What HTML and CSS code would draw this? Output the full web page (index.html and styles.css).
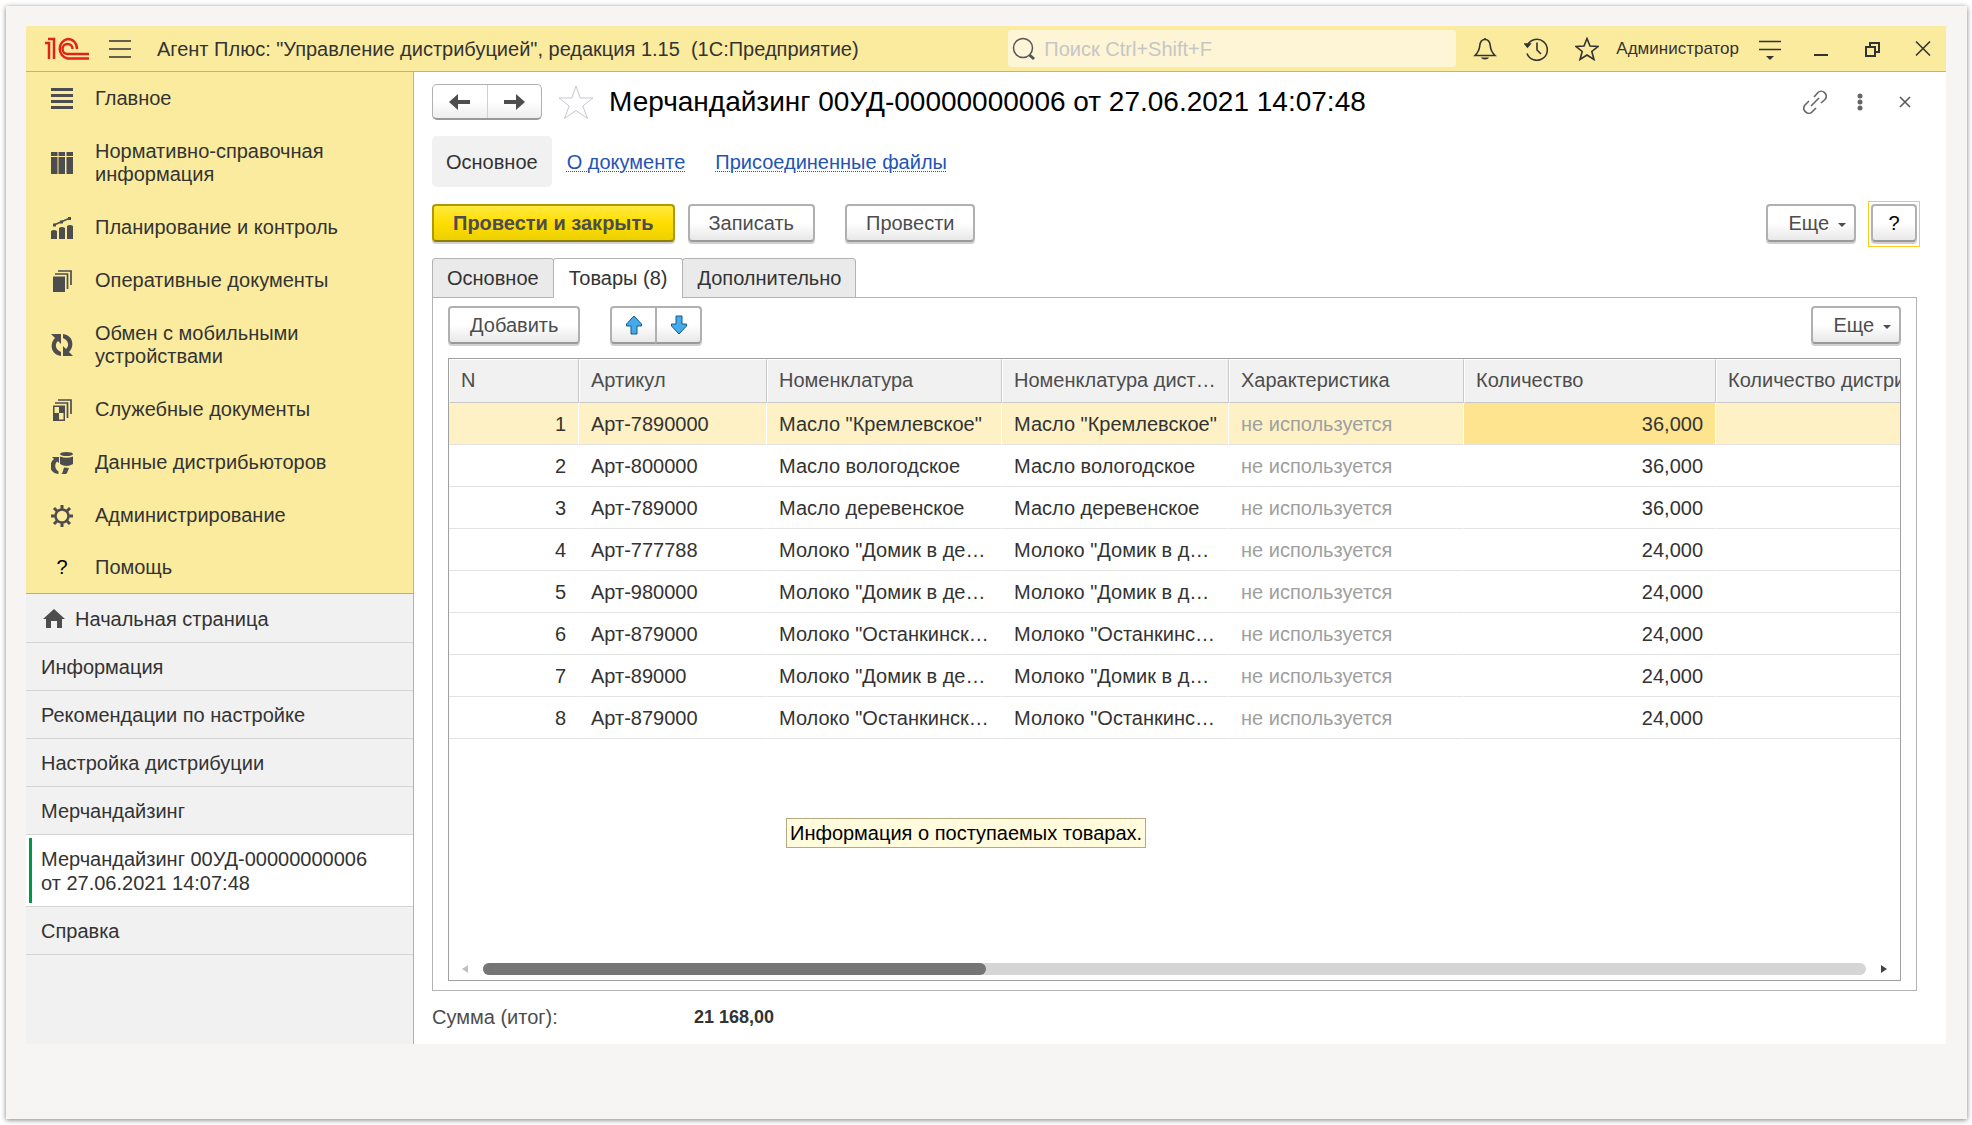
FILE: index.html
```html
<!DOCTYPE html>
<html lang="ru">
  <head>
    <meta charset="utf-8">
    <title>Мерчандайзинг 00УД-00000000006</title>
    <link rel="stylesheet" href="styles.css">
  </head>
  <body>
    <div class="paper">
      <div class="app">
        <header class="topbar">
          <svg class="logo" width="44" height="24" viewBox="0 0 44 24" fill="none" stroke="#e2231a" stroke-width="2.500">
            <path d="M0 6h4v16M3 2h6v20"/>
            <path d="M32 12C32 6 28 2 22.500 2A10 10 0 0 0 22.500 21.500H44"/>
            <path d="M27.500 12C27.500 9 25.500 7 22.500 7A5 5 0 0 0 22.500 17H44"/>
          </svg>
          <button class="icon-btn burger" aria-label="Меню">
            <svg width="24" height="24" viewBox="0 0 24 24" stroke="#333" stroke-width="1.500"><path d="M1 4h22M1 12h22M1 20h22"/></svg>
          </button>
          <span class="app-title">Агент Плюс: "Управление дистрибуцией", редакция 1.15&nbsp; (1С:Предприятие)</span>
          <label class="search">
            <svg width="24" height="24" viewBox="0 0 24 24" fill="none" stroke="#555"><circle cx="11" cy="11" r="9.500" stroke-width="1.500"/><path d="M17.500 18l4.500 4" stroke-width="3"/></svg>
            <input type="text" placeholder="Поиск Ctrl+Shift+F">
          </label>
          <div class="tools">
            <button class="icon-btn" aria-label="Оповещения">
              <svg width="24" height="24" viewBox="0 0 24 24" fill="none" stroke="#333" stroke-width="1.600"><path d="M12 2.500c-4 0-5 3-5.300 6.500C6.300 13.500 4.500 16 2 18.500h20c-2.500-2.500-4.300-5-4.700-9.500C17 5.500 16 2.500 12 2.500z"/><path d="M10.500 2.500a1.500 1.500 0 0 1 3 0zM8 20.500h8c-1 2.500-7 2.500-8 0z" fill="#333" stroke="none"/></svg>
            </button>
            <button class="icon-btn" aria-label="История">
              <svg width="24" height="24" viewBox="0 0 24 24" fill="none" stroke="#333" stroke-width="1.600"><path d="M3.500 8A10.500 10.500 0 1 1 3 16.500M13 5.500V13l4 4"/><path d="M1 7h5l-2.500 3z" fill="#333"/></svg>
            </button>
            <button class="icon-btn" aria-label="Избранное">
              <svg width="24" height="24" viewBox="0 0 24 24" fill="none" stroke="#333" stroke-width="1.600"><path d="M12 1.500l3 7.500 8 .5-6.200 5 2.200 8-7-4.500L5 22.500l2.200-8L1 9.500 9 9z"/></svg>
            </button>
            <button class="user">Администратор</button>
            <button class="icon-btn" aria-label="Настройки">
              <svg width="24" height="24" viewBox="0 0 24 24" stroke="#333" stroke-width="1.500"><path d="M1 4.500h22M1 12.500h22"/><path d="M8 19h8l-4 4z" fill="#333" stroke="none"/></svg>
            </button>
            <button class="icon-btn" aria-label="Свернуть">
              <svg width="24" height="24" viewBox="0 0 24 24"><path d="M5 17h14v2H5z" fill="#333"/></svg>
            </button>
            <button class="icon-btn" aria-label="Восстановить">
              <svg width="24" height="24" viewBox="0 0 24 24" fill="none" stroke="#333" stroke-width="2"><path d="M6 10h9v9H6zM10 10V6h9v9h-4"/></svg>
            </button>
            <button class="icon-btn" aria-label="Закрыть приложение">
              <svg width="24" height="24" viewBox="0 0 24 24" stroke="#333" stroke-width="1.600"><path d="M5 4.500l14 14M19 4.500l-14 14"/></svg>
            </button>
          </div>
        </header>

        <div class="workspace">
          <aside class="sidebar">
            <nav class="sections">
              <a href="#"><svg viewBox="0 0 22 22"><path d="M0 0h22v3H0zM0 6h22v3H0zM0 12h22v3H0zM0 18h22v3H0z"/></svg>Главное</a>
              <a href="#"><svg viewBox="0 0 22 22"><path d="M0 0h6.500v4H0zM7.500 0h6.500v4H7.500zM15.500 0H22v4h-6.500zM0 5h6.500v17H0zM7.500 5h6.500v17H7.500zM15.500 5H22v17h-6.500z"/></svg>Нормативно-справочная информация</a>
              <a href="#"><svg viewBox="0 0 22 22"><path d="M0 14q3-2 6 0v8H0zM8 11q3-2 6 0v11H8zM16 9q3-2 6 0v13h-6z"/><path d="M3 8l8-3.500L18 1.500" fill="none" stroke="#4d4d4d" stroke-width="1.500"/><path d="M2 6.500h3v3H2zM9 3.500h3v3H9zM17 0h3v3h-3z"/></svg>Планирование и контроль</a>
              <a href="#"><svg viewBox="0 0 22 22"><path d="M2 6.500h12V22H2z"/><path d="M4 4h12.500v15M7 1h13v14" fill="none" stroke="#4d4d4d" stroke-width="1.700"/></svg>Оперативные документы</a>
              <a href="#"><svg viewBox="0 0 22 22"><path d="M0 0h10v10L7 7c-4 4-2 9 3 11v4C0 21-2 10 4 4zM22 22H12V12l3 3c4-4 2-9-3-11V0c10 1 12 12 6 18z"/></svg>Обмен с мобильными устройствами</a>
              <a href="#"><svg viewBox="0 0 22 22"><path d="M2 6.500h12V22H2zM3.500 8v6H8V8zM8 14v6.500h4.500V14z" fill-rule="evenodd"/><path d="M4 4h12.500v15M7 1h13v14" fill="none" stroke="#4d4d4d" stroke-width="1.700"/></svg>Служебные документы</a>
              <a href="#"><svg viewBox="0 0 22 22"><ellipse cx="15.500" cy="2" rx="6.500" ry="2"/><path d="M9 4.500q6.500 2.500 13 0V12q-6.500 4-13 0z"/><path d="M1 5h7v6L6 9.500c-3 3-2 8 1.500 10V22C-2 21-3 12 3 7zM10.500 22l1-1.500 1.500-5 5 .500-2 5-1 1z"/></svg>Данные дистрибьюторов</a>
              <a href="#"><svg viewBox="0 0 22 22" fill="none" stroke="#4d4d4d"><circle cx="11" cy="11" r="6.500" stroke-width="2.500"/><path d="M11 0v4M11 18v4M0 11h4M18 11h4M3 3l3 3M16 16l3 3M19 3l-3 3M6 16l-3 3" stroke-width="3"/></svg>Администрирование</a>
              <a href="#"><span class="question">?</span>Помощь</a>
            </nav>
            <nav class="windows">
              <a href="#"><svg class="home" width="22" height="20" viewBox="0 0 22 20"><path d="M11 0l11 10h-3v9h-5v-7H8v7H3v-9H0z" fill="#4d4d4d"/></svg>Начальная страница</a>
              <a href="#">Информация</a>
              <a href="#">Рекомендации по настройке</a>
              <a href="#">Настройка дистрибуции</a>
              <a href="#">Мерчандайзинг</a>
              <a href="#" class="active">Мерчандайзинг 00УД-00000000006 от 27.06.2021 14:07:48</a>
              <a href="#">Справка</a>
            </nav>
          </aside>

          <main class="document">
            <div class="doc-head">
              <div class="history">
                <button aria-label="Назад"><svg width="22" height="16" viewBox="0 0 22 16"><path d="M0 8l9-8v6h12v4H9v6z" fill="#4d4d4d"/></svg></button>
                <button aria-label="Вперед"><svg width="22" height="16" viewBox="0 0 22 16"><path d="M21 8l-9-8v6H0v4h12v6z" fill="#4d4d4d"/></svg></button>
              </div>
              <button class="icon-btn favorite" aria-label="В избранное">
                <svg width="36" height="36" viewBox="0 0 36 36" fill="none" stroke="#c3c8cd"><path d="M18 2l4.200 12H35L24.800 22l4.700 12.500L18 26.500 6.500 34.500 11.200 22 1 14h12.800z"/></svg>
              </button>
              <h1>Мерчандайзинг 00УД-00000000006 от 27.06.2021 14:07:48</h1>
              <div class="doc-tools">
                <button class="icon-btn" aria-label="Ссылка">
                  <svg width="24" height="24" viewBox="0 0 24 24" fill="none" stroke="#666" stroke-width="1.600"><path d="M8 16l8-8M11 7l4-4.500c4-4 11 2 7 7L18 13M13 18l-4 4c-4 4-11-2-7-7l4-4"/></svg>
                </button>
                <button class="icon-btn" aria-label="Действия">
                  <svg width="24" height="24" viewBox="0 0 24 24" fill="#666"><circle cx="12" cy="6" r="2.500"/><circle cx="12" cy="12" r="2.500"/><circle cx="12" cy="18" r="2.500"/></svg>
                </button>
                <button class="icon-btn" aria-label="Закрыть">
                  <svg width="24" height="24" viewBox="0 0 24 24" stroke="#555" stroke-width="1.500"><path d="M7 7l10 10M17 7L7 17"/></svg>
                </button>
              </div>
            </div>

            <nav class="doc-nav">
              <span class="current">Основное</span>
              <a href="#">О документе</a>
              <a href="#">Присоединенные файлы</a>
            </nav>

            <div class="commands">
              <button class="btn primary">Провести и закрыть</button>
              <button class="btn">Записать</button>
              <button class="btn spaced">Провести</button>
              <button class="btn more">Еще <i class="caret"></i></button>
              <button class="btn help">?</button>
            </div>

            <div class="tabs" role="tablist">
              <button role="tab">Основное</button>
              <button role="tab" class="selected" aria-selected="true">Товары (8)</button>
              <button role="tab">Дополнительно</button>
            </div>
            <section class="panel">
              <div class="panel-bar">
                <button class="btn">Добавить</button>
                <div class="move">
                  <button class="btn" aria-label="Вверх"><svg width="18" height="20" viewBox="0 0 18 20"><path d="M9 1l7.500 8v2H12v8H6v-8H1.500V9z" fill="#42aaed" stroke="#155a85"/></svg></button>
                  <button class="btn" aria-label="Вниз"><svg width="18" height="20" viewBox="0 0 18 20"><path d="M9 19l7.500-8V9H12V1H6v8H1.500v2z" fill="#42aaed" stroke="#155a85"/></svg></button>
                </div>
                <button class="btn more">Еще <i class="caret"></i></button>
              </div>
              <div class="grid">
                <div class="grid-view">
                  <table>
                    <colgroup>
                      <col class="c-num"><col class="c-art"><col class="c-name"><col class="c-dist"><col class="c-char"><col class="c-qty"><col class="c-qty-dist">
                    </colgroup>
                    <thead>
                      <tr><th>N</th><th>Артикул</th><th>Номенклатура</th><th>Номенклатура дист…</th><th>Характеристика</th><th>Количество</th><th>Количество дистри</th></tr>
                    </thead>
                    <tbody>
                      <tr class="selected"><td>1</td><td>Арт-7890000</td><td>Масло "Кремлевское"</td><td>Масло "Кремлевское"</td><td>не используется</td><td>36,000</td><td></td></tr>
                      <tr><td>2</td><td>Арт-800000</td><td>Масло вологодское</td><td>Масло вологодское</td><td>не используется</td><td>36,000</td><td></td></tr>
                      <tr><td>3</td><td>Арт-789000</td><td>Масло деревенское</td><td>Масло деревенское</td><td>не используется</td><td>36,000</td><td></td></tr>
                      <tr><td>4</td><td>Арт-777788</td><td>Молоко "Домик в де…</td><td>Молоко "Домик в д…</td><td>не используется</td><td>24,000</td><td></td></tr>
                      <tr><td>5</td><td>Арт-980000</td><td>Молоко "Домик в де…</td><td>Молоко "Домик в д…</td><td>не используется</td><td>24,000</td><td></td></tr>
                      <tr><td>6</td><td>Арт-879000</td><td>Молоко "Останкинск…</td><td>Молоко "Останкинс…</td><td>не используется</td><td>24,000</td><td></td></tr>
                      <tr><td>7</td><td>Арт-89000</td><td>Молоко "Домик в де…</td><td>Молоко "Домик в д…</td><td>не используется</td><td>24,000</td><td></td></tr>
                      <tr><td>8</td><td>Арт-879000</td><td>Молоко "Останкинск…</td><td>Молоко "Останкинс…</td><td>не используется</td><td>24,000</td><td></td></tr>
                    </tbody>
                  </table>
                </div>
                <div class="scrollbar">
                  <i class="arrow left"></i>
                  <div class="track"><div class="thumb"></div></div>
                  <i class="arrow right"></i>
                </div>
                <div class="tooltip" role="tooltip">Информация о поступаемых товарах.</div>
              </div>
            </section>
            <footer class="totals">
              <span class="totals-label">Сумма (итог):</span>
              <b>21 168,00</b>
            </footer>
          </main>
        </div>
      </div>
    </div>
  </body>
</html>
```
FILE: styles.css
```css
* {
  box-sizing: border-box;
}
body {
  margin: 0;
  padding: 6px 5px 6px 6px;
  min-height: 100vh;
  display: flex;
  background: #fff;
  color: #333;
  font: 20px/24px "Liberation Sans", Arial, sans-serif;
}
button, input {
  font: inherit;
  color: inherit;
}
button {
  margin: 0;
  padding: 0;
  border: 0;
  background: none;
  white-space: nowrap;
}
a {
  color: inherit;
  text-decoration: none;
}
svg {
  display: block;
  flex: none;
}
.paper {
  flex: 1;
  min-width: 0;
  display: flex;
  padding: 20px 21px 75px 20px;
  background: #f6f5f3;
  box-shadow: 0 1px 5px rgba(0, 0, 0, 0.5);
}
.app {
  flex: 1;
  min-width: 0;
  display: flex;
  flex-direction: column;
  background: #fff;
}

/* top bar */
.topbar {
  display: flex;
  align-items: center;
  height: 46px;
  padding: 0 11px 0 19px;
  background: #fbeb9e;
  border-bottom: 1px solid #c3b763;
}
.burger {
  margin: 0 25px 0 19px;
}
.app-title {
  flex: 1;
  white-space: nowrap;
  overflow: hidden;
}
.search {
  flex: 0 1 448px;
  display: flex;
  align-items: center;
  gap: 8px;
  height: 37px;
  margin-right: 17px;
  padding-left: 4px;
  background: #fdf5d5;
  border-radius: 3px;
}
.search input {
  flex: 1;
  min-width: 0;
  padding: 0;
  border: 0;
  outline: 0;
  background: none;
}
.search input::placeholder {
  color: #c6c6c6;
  opacity: 1;
}
.tools {
  display: flex;
  align-items: center;
  gap: 27px;
}
.user {
  margin: 0 -8px 0 -10px;
  font-size: 17px;
}

/* sidebar */
.workspace {
  flex: 1;
  display: flex;
  min-height: 0;
}
.sidebar {
  flex: none;
  width: 388px;
  background: #f1f1f1;
  border-right: 1px solid #c3b763;
}
.sections {
  background: #fbeb9e;
  border-bottom: 1px solid #c0b158;
  line-height: 23px;
}
.sections a {
  display: flex;
  align-items: center;
  gap: 22px;
  padding: 15px 60px 15px 25px;
}
.sections a:last-child {
  padding: 14px 60px 14px 25px;
}
.sections svg {
  width: 22px;
  height: 22px;
}
.sections svg:not([fill]) {
  fill: #4d4d4d;
}
.question {
  width: 22px;
  text-align: center;
  color: #000;
}
.windows a {
  display: flex;
  align-items: center;
  padding: 12px 40px 11px 15px;
  border-bottom: 1px solid #d5d5d5;
}
.windows a:first-child {
  padding-top: 13px;
}
.home {
  margin: 0 10px 0 2px;
}
.windows .active {
  position: relative;
  background: #fff;
}
.windows .active::before {
  content: "";
  position: absolute;
  left: 3px;
  top: 3px;
  bottom: 3px;
  width: 3px;
  background: #009846;
}

/* document form */
.document {
  flex: 1;
  min-width: 0;
  display: flex;
  flex-direction: column;
  padding: 12px 29px 2px 18px;
}
.doc-head {
  display: flex;
  align-items: center;
  height: 36px;
}
.history {
  display: flex;
  height: 36px;
  border: 1px solid #b0b0b0;
  border-bottom: 2px solid #999;
  border-radius: 5px;
  background: linear-gradient(#fff 50%, #eee);
}
.history button {
  display: grid;
  place-items: center;
  width: 54px;
}
.history button + button {
  border-left: 1px solid #d0d0d0;
}
.favorite {
  margin: 0 15px 0 16px;
}
h1 {
  flex: 1;
  margin: 0;
  font-size: 28px;
  line-height: 36px;
  font-weight: normal;
  color: #000;
  white-space: nowrap;
}
.doc-tools {
  display: flex;
  gap: 21px;
}
.doc-nav {
  display: flex;
  align-items: center;
  margin: 16px 0 17px;
}
.doc-nav .current {
  padding: 14px 14px 13px;
  margin-right: 15px;
  background: #f1f1f1;
  border-radius: 5px;
}
.doc-nav a {
  margin-right: 30px;
  color: #1f54b5;
  text-decoration: underline dotted 1px;
  text-underline-offset: 2px;
}
.btn {
  height: 38px;
  padding: 0 19px;
  border: 2px solid #b0b0b0;
  border-bottom-color: #999;
  border-radius: 4px;
  background: linear-gradient(#fff 50%, #e8e8e8);
  box-shadow: 0 2px 0 #d0d0d0;
  color: #4d4d4d;
}
.commands {
  display: flex;
  gap: 13px;
  margin-bottom: 16px;
}
.primary {
  border-color: #b09a00;
  border-bottom-color: #8f7d00;
  background: linear-gradient(#ffea3f, #fd0 50%, #ecd000);
  font-weight: bold;
}
.spaced {
  margin-left: 17px;
}
.more {
  width: 90px;
  margin-left: auto;
  padding: 0 0 0 12px;
}
.caret {
  display: inline-block;
  margin: 0 0 3px 3px;
  border: 4px solid transparent;
  border-top-color: #4d4d4d;
  border-bottom: 0;
}
.help {
  position: relative;
  width: 46px;
  margin-left: 2px;
  padding: 0;
  color: #000;
}
/* focus frame */
.help::after {
  content: "";
  position: absolute;
  inset: -5px -5px -7px;
  border: 1px solid #fc2;
}

/* tabs */
.tabs {
  display: flex;
  margin-bottom: -1px;
}
.tabs button {
  position: relative;
  height: 40px;
  padding: 0 14px;
  background: #eaeaea;
  border: 1px solid #b3b3b3;
  border-radius: 3px 3px 0 0;
}
.tabs button + button {
  margin-left: -1px;
}
.tabs .selected {
  padding: 0 15px;
  background: #fff;
  border-bottom-color: #fff;
}
.panel {
  flex: 1;
  display: flex;
  flex-direction: column;
  padding: 8px 15px 9px;
  border: 1px solid #b3b3b3;
}
.panel-bar {
  display: flex;
  gap: 30px;
  margin-bottom: 14px;
}
.panel-bar > .btn:first-child {
  padding: 0 20px;
}
.move {
  display: flex;
}
.move .btn {
  display: grid;
  place-items: center;
  width: 47px;
  padding: 0;
  border-radius: 4px 0 0 4px;
}
.move .btn + .btn {
  margin-left: -2px;
  border-radius: 0 4px 4px 0;
}

/* goods table */
.grid {
  position: relative;
  flex: 1;
  display: flex;
  flex-direction: column;
  min-width: 0;
  border: 1px solid #a0a0a0;
}
.grid-view {
  flex: 1;
  overflow: hidden;
}
table {
  width: 1600px;
  table-layout: fixed;
  border-collapse: separate;
  border-spacing: 0;
}
.c-num { width: 130px; }
.c-art { width: 188px; }
.c-name, .c-char { width: 235px; }
.c-dist { width: 227px; }
.c-qty { width: 252px; }
th, td {
  padding: 0 12px;
  text-align: left;
  white-space: nowrap;
}
th {
  height: 44px;
  padding: 0 11px 2px;
  border: 1px solid #fff;
  border-right-color: #c8c8c8;
  border-bottom-color: #c8c8c8;
  background: #f1f1f1;
  font-weight: normal;
  color: #4d4d4d;
}
td {
  height: 42px;
  border-bottom: 1px solid #e3e3e3;
  border-right: 1px solid #fff;
}
td:first-child, td:nth-child(6) {
  text-align: right;
}
td:nth-child(5) {
  color: #a0a0a0;
}
tbody .selected td {
  background: #fdf1c5;
}
tbody .selected td:nth-child(6) {
  background: #fee48e;
}
.scrollbar {
  display: flex;
  align-items: center;
  gap: 15px;
  padding: 0 13px 5px;
}
.track {
  flex: 1;
  height: 12px;
  background: #d5d5d5;
  border-radius: 6px;
}
.thumb {
  width: 36.4%;
  height: 12px;
  background: #757575;
  border-radius: 6px;
}
.arrow {
  border: 4px solid transparent;
}
.arrow.left {
  border-left: 0;
  border-right: 6px solid #c0c0c0;
}
.arrow.right {
  border-right: 0;
  border-left: 6px solid #444;
}
.tooltip {
  position: absolute;
  left: 337px;
  top: 459px;
  padding: 2px 3px;
  background: #fffbdc;
  border: 1px solid #b5a982;
  color: #000;
  white-space: nowrap;
}
.totals {
  display: flex;
  align-items: center;
  height: 51px;
}
.totals-label {
  width: 262px;
  color: #4d4d4d;
}
.totals b {
  font-size: 18px;
}
```
